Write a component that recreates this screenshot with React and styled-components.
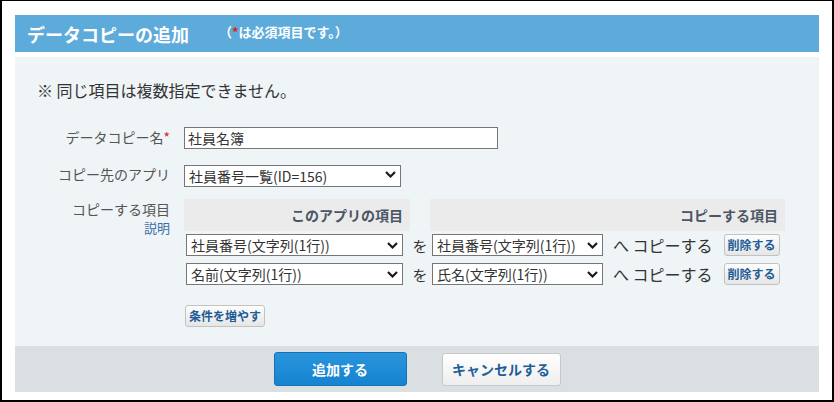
import React from 'react';
import styled, { createGlobalStyle } from 'styled-components';

const GlobalStyle = createGlobalStyle`
  html, body { margin: 0; padding: 0; background: #fff; }
  body { font-family: "Noto Sans CJK JP", "Noto Sans", sans-serif; color: #333; }
  * { box-sizing: border-box; }
`;

const Frame = styled.div`
  width: 834px;
  height: 402px;
  border-style: solid;
  border-color: #000;
  border-width: 1px 2px 2px 2px;
  padding: 14px 13px 13px 13px;
  background: #fff;
`;

const Header = styled.div`
  height: 37px;
  background: #5dabdb;
  display: flex;
  align-items: center;
  padding-left: 12px;
  color: #fff;
  font-weight: bold;
`;

const Title = styled.h1`
  margin: 0;
  font-size: 18px;
  line-height: 22px;
  font-weight: bold;
`;

const Note = styled.span`
  font-size: 13px;
  line-height: 15px;
  margin-left: 30px;
  margin-top: -5px;
`;

const Star = styled.span`
  color: #e0201b;
`;

const Body = styled.div`
  margin-top: 5px;
  background: #eff4f7;
  padding: 23px 0 19px 0;
`;

const Notice = styled.p`
  margin: 0 0 25px 22px;
  font-size: 16px;
  line-height: 20px;
  color: #333;
`;

const Form = styled.div`
  display: grid;
  grid-template-columns: 155px 1fr;
  column-gap: 14px;
  row-gap: 14px;
`;

const Label = styled.div`
  text-align: right;
  font-size: 14px;
  line-height: 20px;
  color: #555;
  align-self: ${p => (p.top ? 'start' : 'center')};
`;

const HelpLink = styled.a`
  display: block;
  margin-top: 1px;
  font-size: 13px;
  line-height: 15px;
  color: #3a6ea8;
  text-decoration: none;
`;

const TextInput = styled.input`
  width: 314px;
  height: 22px;
  border: 1px solid #767676;
  padding: 0 3px;
  font-family: inherit;
  font-size: 14px;
  color: #333;
  background: #fff;
  outline: none;
`;

const SelectWrap = styled.div`
  position: relative;
  width: ${p => p.w}px;
  height: 22px;
  margin-left: ${p => p.ml || 0}px;
`;

const Select = styled.select`
  appearance: none;
  width: 100%;
  height: 100%;
  border: 1px solid #767676;
  border-radius: 0;
  background: #fff;
  padding: 0 22px 0 4px;
  font-family: inherit;
  font-size: 14px;
  color: #333;
  outline: none;
`;

const Chevron = styled.svg`
  position: absolute;
  right: 5px;
  top: 8px;
  pointer-events: none;
`;

const TableRow = styled.div`
  display: grid;
  grid-template-columns: 226px 20px 355px;
  height: ${p => (p.head ? 32 : 22)}px;
  margin-top: ${p => p.mt || 0}px;
`;

const HeadCell = styled.div`
  background: ${p => (p.empty ? 'transparent' : '#ebebeb')};
  text-align: right;
  padding-right: 7px;
  font-size: 14px;
  font-weight: bold;
  line-height: 32px;
  color: #4a5664;
`;

const Cell = styled.div`
  display: flex;
  align-items: center;
  justify-content: ${p => (p.center ? 'center' : 'flex-start')};
  font-size: 15px;
  color: #333;
`;

const CopyText = styled.span`
  margin-left: 10px;
  font-size: 16px;
  line-height: 20px;
  color: #333;
  white-space: nowrap;
`;

const SmallButton = styled.button`
  height: 22px;
  padding: 0 3px;
  border: 1px solid #c2c2c2;
  border-radius: 3px;
  background: linear-gradient(#fdfdfd, #e6e6e6);
  font-family: inherit;
  font-size: 12px;
  font-weight: bold;
  color: #1f5d94;
  line-height: 20px;
  margin-left: ${p => p.ml || 0}px;
  cursor: pointer;
  white-space: nowrap;
`;

const AddRow = styled.div`
  margin-top: 17px;
  padding-left: 1px;
`;

const Footer = styled.div`
  height: 46px;
  background: #dadfe2;
  display: flex;
  align-items: center;
  justify-content: center;
  gap: 35px;
`;

const PrimaryButton = styled.button`
  width: 133px;
  height: 34px;
  border: 1px solid #1572b8;
  border-radius: 3px;
  background: linear-gradient(#2a95dc, #1583d0);
  color: #fff;
  font-family: inherit;
  font-size: 14px;
  font-weight: bold;
  cursor: pointer;
`;

const SecondaryButton = styled.button`
  width: 119px;
  height: 33px;
  border: 1px solid #c5c9cc;
  border-radius: 3px;
  background: linear-gradient(#ffffff, #eeeeee);
  color: #1d5f98;
  font-family: inherit;
  font-size: 14px;
  font-weight: bold;
  cursor: pointer;
`;

const Arrow = () => (
  <Chevron width="11" height="7" viewBox="0 0 11 7">
    <path d="M1 1 L5.5 5.5 L10 1" fill="none" stroke="#1a1a1a" strokeWidth="2.2" />
  </Chevron>
);

const Dropdown = ({ value, w, ml }) => (
  <SelectWrap w={w} ml={ml}>
    <Select defaultValue={value}>
      <option>{value}</option>
    </Select>
    <Arrow />
  </SelectWrap>
);

const rows = [
  { from: '社員番号(文字列(1行))', to: '社員番号(文字列(1行))' },
  { from: '名前(文字列(1行))', to: '氏名(文字列(1行))' },
];

export default function App() {
  return (
    <>
      <GlobalStyle />
      <Frame>
        <Header>
          <Title>データコピーの追加</Title>
          <Note>（<Star>*</Star>は必須項目です。）</Note>
        </Header>
        <Body>
          <Notice>※ 同じ項目は複数指定できません。</Notice>
          <Form>
            <Label>データコピー名<Star>*</Star></Label>
            <div><TextInput defaultValue="社員名簿" /></div>

            <Label>コピー先のアプリ</Label>
            <Dropdown value="社員番号一覧(ID=156)" w={217} />

            <Label top>
              コピーする項目
              <HelpLink href="#">説明</HelpLink>
            </Label>
            <div>
              <TableRow head>
                <HeadCell>このアプリの項目</HeadCell>
                <HeadCell empty />
                <HeadCell>コピーする項目</HeadCell>
              </TableRow>
              {rows.map((r, i) => (
                <TableRow key={i} mt={i === 0 ? 3 : 7}>
                  <Cell><Dropdown value={r.from} w={217} ml={2} /></Cell>
                  <Cell center>を</Cell>
                  <Cell>
                    <Dropdown value={r.to} w={171} ml={2} />
                    <CopyText>へ コピーする</CopyText>
                    <SmallButton ml={11}>削除する</SmallButton>
                  </Cell>
                </TableRow>
              ))}
              <AddRow>
                <SmallButton>条件を増やす</SmallButton>
              </AddRow>
            </div>
          </Form>
        </Body>
        <Footer>
          <PrimaryButton>追加する</PrimaryButton>
          <SecondaryButton>キャンセルする</SecondaryButton>
        </Footer>
      </Frame>
    </>
  );
}
